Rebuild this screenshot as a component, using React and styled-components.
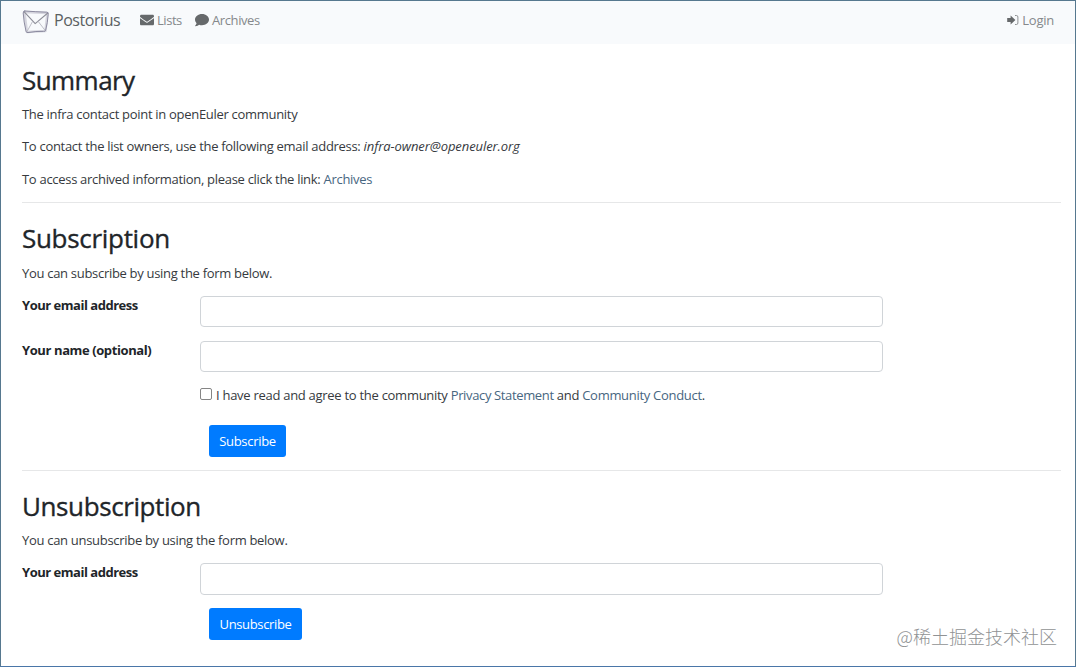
import React from "react";
import styled, { createGlobalStyle } from "styled-components";
import { FaEnvelope, FaComment } from "react-icons/fa";

const GlobalStyle = createGlobalStyle`
  * {
    box-sizing: border-box;
  }
  body {
    margin: 0;
    background: #fff;
    color: #363a3e;
    font: 13px/20px "Open Sans", "Noto Sans", sans-serif;
  }
`;

const Page = styled.div`
  position: relative;
  height: 667px;
  overflow: hidden;
  border: 1px solid #56788f;
  border-bottom-color: #4a76a8;
`;

const Navbar = styled.nav`
  display: flex;
  align-items: center;
  height: 43px;
  padding: 0 21px 5px 21px;
  background: #f8fafc;
`;

const Brand = styled.a`
  display: flex;
  align-items: center;
  gap: 4px;
  width: 118px;
  color: #5b5f62;
  font-size: 16px;
  line-height: 22px;
  letter-spacing: ${(p) => p.$spacing}px;
  white-space: nowrap;
  svg {
    margin-top: 4px;
  }
  span {
    margin-bottom: 1px;
  }
`;

const NavLink = styled.a`
  display: flex;
  align-items: center;
  gap: 3px;
  margin-left: ${(p) => (p.$right ? "auto" : 0)};
  width: ${(p) => (p.$width ? `${p.$width}px` : "auto")};
  color: #85888b;
  letter-spacing: ${(p) => p.$spacing}px;
  white-space: nowrap;
  svg {
    flex: none;
    color: #66696b;
  }
  span {
    margin-bottom: 1px;
  }
`;

const Content = styled.main`
  padding: 20px 14px 0 21px;
`;

const Title = styled.h2`
  margin: 0 0 ${(p) => p.$gap || 7}px;
  color: #212529;
  font-size: 26px;
  font-weight: 500;
  line-height: 33px;
  letter-spacing: ${(p) => p.$spacing}px;
  -webkit-text-stroke: 0.35px #212529;
`;

const Text = styled.p`
  margin: 0 0 ${(p) => p.$gap || 13}px;
  letter-spacing: ${(p) => p.$spacing}px;
  white-space: nowrap;
`;

const Email = styled.em`
  letter-spacing: ${(p) => p.$spacing}px;
`;

const Anchor = styled.a`
  color: #47667f;
  letter-spacing: ${(p) => p.$spacing}px;
`;

const Divider = styled.hr`
  margin: ${(p) => p.$top}px 0 19px;
  border: 0;
  border-top: 1px solid #e6e7e8;
`;

const Field = styled.div`
  display: grid;
  grid-template-columns: 178px 683px;
  height: ${(p) => p.$height}px;
  margin-bottom: ${(p) => 45 - p.$height}px;
`;

const Label = styled.label`
  color: #212529;
  font-weight: 700;
  letter-spacing: ${(p) => p.$spacing}px;
  line-height: 19px;
`;

const Input = styled.input`
  width: 100%;
  height: 100%;
  border: 1px solid #d0d4d8;
  border-radius: 4px;
  background: #fff;
`;

const Agreement = styled.div`
  display: flex;
  height: 20px;
  margin: -1px 0 20px 178px;
  letter-spacing: ${(p) => p.$spacing}px;
  white-space: pre;
`;

const Checkbox = styled.input`
  appearance: none;
  width: 12px;
  height: 12px;
  margin: 3px 4px 0 0;
  border: 1px solid #858585;
  border-radius: 2px;
  background: #fff;
`;

const Button = styled.button`
  display: block;
  width: ${(p) => p.$width}px;
  height: 32px;
  margin-left: 187px;
  padding: 0;
  border: 0;
  border-radius: 3px;
  background: #007bff;
  color: #fff;
  font: inherit;
  letter-spacing: ${(p) => p.$spacing}px;
`;

const Watermark = styled.div`
  position: absolute;
  right: 18px;
  bottom: 17px;
  color: #909294;
  font: 300 18px/26px "Noto Sans CJK SC", sans-serif;
  white-space: nowrap;
`;

function Logo() {
  return (
    <svg width="28" height="24" viewBox="0 0 28 24" fill="none" strokeLinejoin="round" strokeLinecap="round">
      <path d="M2.4 2 L25.4 3 L23.4 21 L5 22 Z" stroke="#d6d6df" strokeWidth="2.4" />
      <path d="M2 1.6 L13.2 13.6 L25.8 3" stroke="#8d8e98" strokeWidth="1.1" />
      <path d="M10.6 11.4 L5 21.6 M16.2 11.4 L23.4 20.8" stroke="#b8b8c2" strokeWidth="0.9" />
      <path d="M2.8 1 Q14 1.8 24.8 2.2 Q26.6 2.4 26.2 4.4 Q25.6 13 23.6 20.4 Q23.2 21.6 21.6 21.4 Q14 21 6 22.6 Q4.4 22.8 4 21.2 Q1.8 12 1.2 3 Q1.2 1 2.8 1 Z" stroke="#8c8ba0" strokeWidth="1" />
    </svg>
  );
}

function LoginIcon() {
  return (
    <svg width="13" height="12" viewBox="0 0 13 12">
      <path d="M1.2 4 H4.6 V1.5 L9.4 6 L4.6 10.5 V8 H1.2 Z" fill="currentColor" />
      <path d="M9 1.5 H10.4 Q11.9 1.5 11.9 3 V9 Q11.9 10.5 10.4 10.5 H9" fill="none" stroke="#8f9294" />
    </svg>
  );
}

export default function App() {
  return (
    <>
      <GlobalStyle />
      <Page>
        <Navbar>
          <Brand $spacing={-0.45}>
            <Logo />
            <span>Postorius</span>
          </Brand>
          <NavLink $width={55} $spacing={-0.45}>
            <FaEnvelope size={14} />
            <span>Lists</span>
          </NavLink>
          <NavLink $spacing={-0.4}>
            <FaComment size={14} />
            <span>Archives</span>
          </NavLink>
          <NavLink $right $spacing={-0.25}>
            <LoginIcon />
            <span>Login</span>
          </NavLink>
        </Navbar>
        <Content>
          <Title $spacing={-0.55}>Summary</Title>
          <Text $gap={12} $spacing={-0.3}>The infra contact point in openEuler community</Text>
          <Text $spacing={-0.3}>
            To contact the list owners, use the following email address:{" "}
            <Email $spacing={-0.08}>infra-owner@openeuler.org</Email>
          </Text>
          <Text $spacing={-0.3}>
            To access archived information, please click the link: <Anchor $spacing={-0.3}>Archives</Anchor>
          </Text>
          <Divider $top={12} />

          <Title $gap={8} $spacing={-0.3}>Subscription</Title>
          <Text $spacing={-0.3}>You can subscribe by using the form below.</Text>
          <Field $height={31}>
            <Label $spacing={-0.48}>Your email address</Label>
            <Input type="email" />
          </Field>
          <Field $height={31}>
            <Label $spacing={-0.4}>Your name (optional)</Label>
            <Input type="text" />
          </Field>
          <Agreement $spacing={-0.28}>
            <Checkbox type="checkbox" />
            <span>
              I have read and agree to the community <Anchor $spacing={-0.36}>Privacy Statement</Anchor> and{" "}
              <Anchor $spacing={-0.3}>Community Conduct</Anchor>.
            </span>
          </Agreement>
          <Button $width={77} $spacing={-0.3}>Subscribe</Button>
          <Divider $top={13} />

          <Title $spacing={-0.4}>Unsubscription</Title>
          <Text $spacing={-0.3}>You can unsubscribe by using the form below.</Text>
          <Field $height={32}>
            <Label $spacing={-0.48}>Your email address</Label>
            <Input type="email" />
          </Field>
          <Button $width={93} $spacing={-0.35}>Unsubscribe</Button>
        </Content>
        <Watermark>@稀土掘金技术社区</Watermark>
      </Page>
    </>
  );
}
